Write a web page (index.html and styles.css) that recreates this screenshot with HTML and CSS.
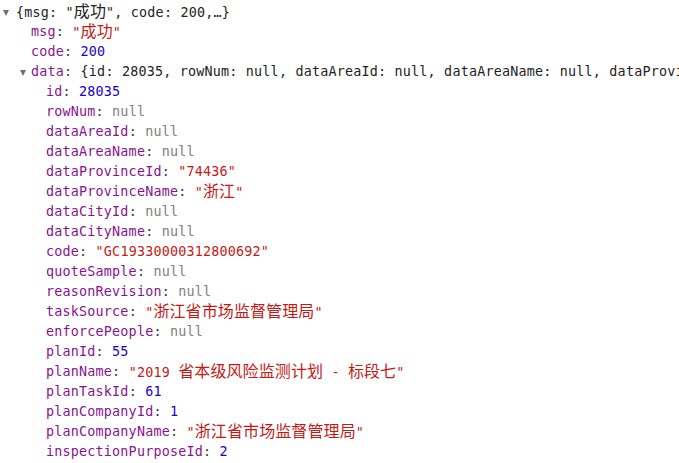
FILE: index.html
```html
<!DOCTYPE html>
<html lang="zh">
<head>
<meta charset="utf-8">
<title>console</title>
<link rel="stylesheet" href="styles.css">
</head>
<body>
<div class="tree">
  <div class="row root"><span class="tri"></span><span class="preview">{msg: "<span class="cjk">成功</span>", code: 200,…}</span></div>
  <div class="kids lvl1">
    <div class="row"><span class="key">msg</span><span class="p">: </span><span class="str">"<span class="cjk">成功</span>"</span></div>
    <div class="row"><span class="key">code</span><span class="p">: </span><span class="num">200</span></div>
    <div class="row open"><span class="tri"></span><span class="key">data</span><span class="p">: </span><span class="preview">{id: 28035, rowNum: null, dataAreaId: null, dataAreaName: null, dataProvinceId: "74436", dataProvinceName: "浙江"}</span></div>
    <div class="kids lvl2">
      <div class="row"><span class="key">id</span><span class="p">: </span><span class="num">28035</span></div>
      <div class="row"><span class="key">rowNum</span><span class="p">: </span><span class="null">null</span></div>
      <div class="row"><span class="key">dataAreaId</span><span class="p">: </span><span class="null">null</span></div>
      <div class="row"><span class="key">dataAreaName</span><span class="p">: </span><span class="null">null</span></div>
      <div class="row"><span class="key">dataProvinceId</span><span class="p">: </span><span class="str">"74436"</span></div>
      <div class="row"><span class="key">dataProvinceName</span><span class="p">: </span><span class="str">"<span class="cjk">浙江</span>"</span></div>
      <div class="row"><span class="key">dataCityId</span><span class="p">: </span><span class="null">null</span></div>
      <div class="row"><span class="key">dataCityName</span><span class="p">: </span><span class="null">null</span></div>
      <div class="row"><span class="key">code</span><span class="p">: </span><span class="str">"GC19330000312800692"</span></div>
      <div class="row"><span class="key">quoteSample</span><span class="p">: </span><span class="null">null</span></div>
      <div class="row"><span class="key">reasonRevision</span><span class="p">: </span><span class="null">null</span></div>
      <div class="row"><span class="key">taskSource</span><span class="p">: </span><span class="str">"<span class="cjk">浙江省市场监督管理局</span>"</span></div>
      <div class="row"><span class="key">enforcePeople</span><span class="p">: </span><span class="null">null</span></div>
      <div class="row"><span class="key">planId</span><span class="p">: </span><span class="num">55</span></div>
      <div class="row"><span class="key">planName</span><span class="p">: </span><span class="str">"2019 <span class="cjk">省本级风险监测计划</span> - <span class="cjk">标段七</span>"</span></div>
      <div class="row"><span class="key">planTaskId</span><span class="p">: </span><span class="num">61</span></div>
      <div class="row"><span class="key">planCompanyId</span><span class="p">: </span><span class="num">1</span></div>
      <div class="row"><span class="key">planCompanyName</span><span class="p">: </span><span class="str">"<span class="cjk">浙江省市场监督管理局</span>"</span></div>
      <div class="row"><span class="key">inspectionPurposeId</span><span class="p">: </span><span class="num">2</span></div>
    </div>
  </div>
</div>
</body>
</html>
```
FILE: styles.css
```css
html, body {
  margin: 0;
  padding: 0;
  background: #ffffff;
  overflow: hidden;
}
body {
  width: 679px;
  height: 463px;
}
.tree {
  padding-top: 2px;
  font-family: "DejaVu Sans Mono", "Liberation Mono", "Noto Sans CJK SC", monospace;
  font-size: 13.4px;
  letter-spacing: 0.2px;
  color: #303942;
  white-space: nowrap;
}
.row {
  height: 20px;
  line-height: 20px;
  display: flex;
  align-items: center;
}
.root {
  padding-left: 16px;
  position: relative;
}
.lvl1 {
  padding-left: 31px;
}
.lvl1 > .row.open {
  position: relative;
}
.lvl2 {
  padding-left: 15px;
}
.tri {
  position: absolute;
  top: 8px;
  width: 0;
  height: 0;
  border-left: 3.5px solid transparent;
  border-right: 3.5px solid transparent;
  border-top: 6px solid #6e6e6e;
}
.root .tri {
  left: 3px;
}
.open .tri {
  left: -11px;
}
.cjk {
  font-family: "Noto Sans CJK SC", sans-serif;
  font-size: 16px;
  line-height: 1;
  letter-spacing: 0.1px;
}
.key { color: #881391; }
.p { color: #303942; white-space: pre; }
.str { color: #c41a16; }
.num { color: #1c00cf; }
.null { color: #808080; }
.preview { color: #222222; }
```
